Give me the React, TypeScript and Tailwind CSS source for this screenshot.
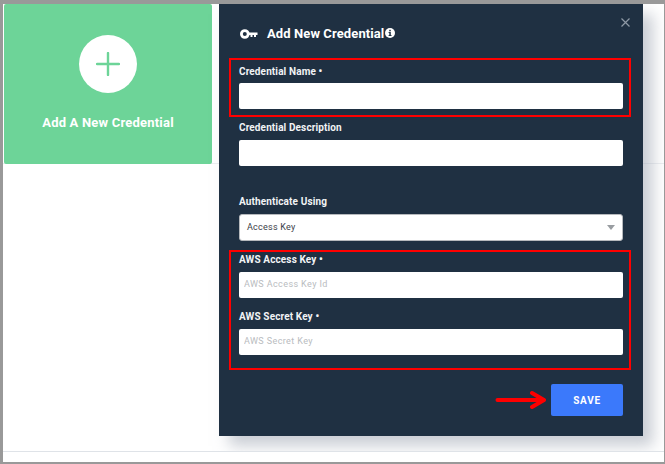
const Field = ({ label, required, placeholder, tight }: { label: string; required?: boolean; placeholder?: string; tight?: boolean }) => (
  <div>
    <p className="h-[13px] text-[10px] leading-[13px] font-bold tracking-[0.12px] text-[#f1f3f5]">
      {label}
      {required && <span className="font-black"> •</span>}
    </p>
    <input
      placeholder={placeholder}
      className={`${tight ? "mt-[5px]" : "mt-[6px]"} block w-[384px] h-[26px] rounded-[2px] bg-white px-[5px] pb-[2px] text-[9px] tracking-[0.4px] outline-none placeholder:text-[#b9bcc0]`}
    />
  </div>
);

const KeyIcon = () => (
  <svg width="18" height="10" viewBox="0 0 18 10" fill="none">
    <circle cx="4.8" cy="5" r="3.4" stroke="white" strokeWidth="2.8" />
    <path d="M8 3.5H17.5V5.9H16V8H14V5.9H12.5V8H10.5V5.9H8Z" fill="white" />
  </svg>
);

const InfoIcon = () => (
  <svg width="10" height="10" viewBox="0 0 10 10">
    <circle cx="5" cy="5" r="5" fill="white" />
    <rect x="4.2" y="1.8" width="1.6" height="1.5" fill="#1f3042" />
    <path d="M3.6 4.1H5.8V7H6.5V8H3.6V7H4.3V5.1H3.6Z" fill="#1f3042" />
  </svg>
);

export default function App() {
  return (
    <div className="relative w-[665px] h-[464px] bg-white border-t-[4px] border-l-[3px] border-r border-b-2 border-[#999999] font-['Roboto',sans-serif] overflow-hidden">
      <div className="h-[448px] border-b border-[#dfe3e8] overflow-hidden relative">
        <div className="h-[160px] border-b border-[#eceef1]">
          <div className="ml-px w-[208px] h-[160px] rounded-[2px] bg-[#6dd498] flex flex-col items-center pt-[31px]">
            <div className="w-[58px] h-[58px] rounded-full bg-white flex items-center justify-center">
              <svg width="24" height="24" viewBox="0 0 24 24" fill="none">
                <path d="M12 1V23M1 12H23" stroke="#6dd498" strokeWidth="2.4" strokeLinecap="round" />
              </svg>
            </div>
            <p className="mt-[22px] text-[13px] leading-[16px] font-bold tracking-[0.2px] text-white">Add A New Credential</p>
          </div>
        </div>

        {/* modal */}
        <div className="absolute left-[216px] top-0 w-[424px] h-[432px] bg-[#1f3042] shadow-[10px_10px_14px_rgba(150,158,172,0.5)]">
          <svg className="absolute right-[13px] top-[14px]" width="9" height="9" viewBox="0 0 9 9" fill="none">
            <path d="M0.5 0.5L8.5 8.5M8.5 0.5L0.5 8.5" stroke="#8e99a5" strokeWidth="1.2" />
          </svg>

          <div className="flex items-center h-[54px] pl-[21px] pt-[6px]">
            <KeyIcon />
            <h2 className="ml-[9px] text-[13px] leading-[16px] font-bold tracking-[0.1px] text-white">Add New Credential</h2>
            <span className="ml-px -mt-[3px]"><InfoIcon /></span>
          </div>

          <div className="ml-[10px] w-[402px] h-[59px] border-2 border-[#ff0000] pl-[8px] pt-[5px]">
            <Field label="Credential Name" required tight />
          </div>

          <div className="ml-[20px] mt-[4px]">
            <Field label="Credential Description" />
          </div>

          <div className="ml-[20px] mt-[29px]">
            <p className="h-[13px] text-[10px] leading-[13px] font-bold tracking-[0.12px] text-[#f1f3f5]">Authenticate Using</p>
            <div className="mt-[6px] w-[384px] h-[27px] rounded-[3px] bg-white border border-[#b6b9bd] flex items-center justify-between pl-[7px] pr-[7px]">
              <span className="text-[9px] tracking-[0.25px] text-[#3b4148]">Access Key</span>
              <span className="w-0 h-0 border-x-[4px] border-t-[5px] border-x-transparent border-t-[#999da1]" />
            </div>
          </div>

          <div className="ml-[10px] mt-[9px] w-[402px] h-[120px] border-2 border-[#ff0000] pl-[8px] pt-[1px]">
            <Field label="AWS Access Key" required placeholder="AWS Access Key Id" />
            <div className="mt-[12px]">
              <Field label="AWS Secret Key" required placeholder="AWS Secret Key" />
            </div>
          </div>

          <div className="flex justify-end items-center mt-[14px] pr-[20px]">
            <svg className="mr-[4px]" width="52" height="20" viewBox="0 0 52 20" fill="none">
              <path d="M2.5 10H48M37 3L49 10L37 17" stroke="#ff0000" strokeWidth="4" strokeLinecap="round" strokeLinejoin="round" />
            </svg>
            <button className="w-[72px] h-[32px] rounded-[2px] bg-[#3b79fb] text-[10px] font-bold tracking-[0.7px] text-white">SAVE</button>
          </div>
        </div>
      </div>
    </div>
  );
}
